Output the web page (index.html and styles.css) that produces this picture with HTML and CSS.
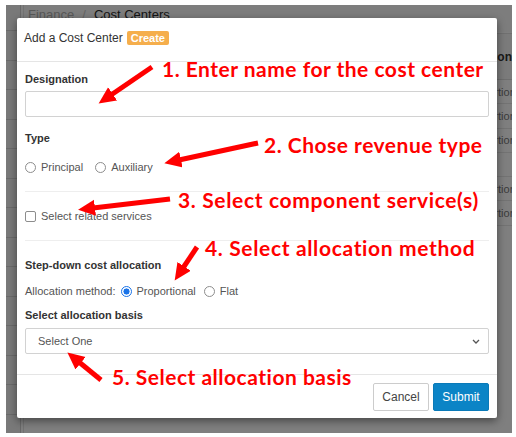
FILE: index.html
```html
<!DOCTYPE html>
<html>
<head>
<meta charset="utf-8">
<link rel="stylesheet" href="styles.css">
</head>
<body>
<div class="screen">
  <div class="page">
    <div class="sidebar"></div>
    <div class="main">
      <div class="crumbs"><span class="crumb-muted">Finance</span><span class="crumb-sep">/</span><span class="crumb-current">Cost Centers</span></div>
      <div class="table">
        <div class="thead"><span class="cell-right">Allocation</span></div>
        <div class="trow"><span class="cell-right">Proportional</span></div>
        <div class="trow"><span class="cell-right">Proportional</span></div>
        <div class="trow"><span class="cell-right">Proportional</span></div>
        <div class="trow"><span class="cell-right"></span></div>
        <div class="trow"><span class="cell-right">Proportional</span></div>
        <div class="trow"><span class="cell-right">Proportional</span></div>
      </div>
    </div>
  </div>
  <div class="backdrop"></div>
  <div class="modal">
    <div class="modal-header"><span class="title">Add a Cost Center</span><span class="badge">Create</span></div>
    <div class="modal-body">
      <div class="label first">Designation</div>
      <div class="field"></div>
      <div class="label type-label">Type</div>
      <div class="choice-row type-row">
        <span class="radio"></span><span class="opt-text">Principal</span>
        <span class="radio next"></span><span class="opt-text">Auxiliary</span>
      </div>
      <div class="divider"></div>
      <div class="choice-row check-row">
        <span class="checkbox"></span><span class="opt-text">Select related services</span>
      </div>
      <div class="divider"></div>
      <div class="label step-label">Step-down cost allocation</div>
      <div class="choice-row alloc-row">
        <span class="opt-text">Allocation method:</span>
        <span class="radio checked"></span><span class="opt-text">Proportional</span>
        <span class="radio next-small"></span><span class="opt-text">Flat</span>
      </div>
      <div class="label basis-label">Select allocation basis</div>
      <div class="field select"><span>Select One</span>
        <svg class="chev" width="8" height="5" viewBox="0 0 8 5"><path d="M1 1 L4 4 L7 1" fill="none" stroke="#555" stroke-width="1.3"/></svg>
      </div>
    </div>
    <div class="modal-footer">
      <button class="btn btn-cancel">Cancel</button>
      <button class="btn btn-submit">Submit</button>
    </div>
  </div>
</div>

<div class="annotations">
  <svg class="arrows" width="516" height="437" viewBox="0 0 516 437">
    <defs>
      <marker id="head" markerUnits="userSpaceOnUse" markerWidth="18" markerHeight="18" refX="2" refY="8" orient="auto">
        <path d="M0 0 L17 8 L0 16 Z" fill="#ff0000"/>
      </marker>
    </defs>
    <line x1="152" y1="67" x2="111" y2="95" stroke="#ff0000" stroke-width="5" marker-end="url(#head)"/>
    <line x1="258" y1="143" x2="179" y2="160" stroke="#ff0000" stroke-width="5" marker-end="url(#head)"/>
    <line x1="170" y1="199" x2="93" y2="208" stroke="#ff0000" stroke-width="5" marker-end="url(#head)"/>
    <line x1="197" y1="247" x2="183" y2="268" stroke="#ff0000" stroke-width="5" marker-end="url(#head)"/>
    <line x1="101" y1="380" x2="79" y2="362" stroke="#ff0000" stroke-width="5" marker-end="url(#head)"/>
  </svg>
  <div class="note n1">1. Enter name for the cost center</div>
  <div class="note n2">2. Chose revenue type</div>
  <div class="note n3">3. Select component service(s)</div>
  <div class="note n4">4. Select allocation method</div>
  <div class="note n5">5. Select allocation basis</div>
</div>
</body>
</html>
```

FILE: styles.css
```css
* { box-sizing: border-box; }
html, body { margin: 0; padding: 0; background: #ffffff; }
body {
  width: 516px;
  height: 437px;
  position: relative;
  overflow: hidden;
  font-family: "Liberation Sans", Arial, sans-serif;
}

.screen {
  position: relative;
  margin: 5px 0 0 6px;
  width: 506px;
  height: 428px;
  overflow: hidden;
  background: #ffffff;
}

.page {
  display: flex;
  height: 100%;
}
.sidebar {
  width: 15px;
  flex: none;
  background-color: #f2f2f2;
  border-right: 1px solid #d0d0d0;
  background-image: repeating-linear-gradient(to bottom, transparent 0, transparent 28.5px, #d4d4d4 28.5px, #d4d4d4 29.5px);
  background-position: 0 -3px;
}
.main {
  flex: 1;
  border-left: 1px solid #e4e4e4;
  margin-left: 2px;
  display: flex;
  flex-direction: column;
}
.crumbs {
  height: 27px;
  padding: 2px 0 0 4px;
  font-size: 13px;
  line-height: 15px;
  display: flex;
  gap: 8px;
  background: #fafafa;
}
.crumb-muted { color: #b0b0b0; }
.crumb-sep { color: #c8c8c8; }
.crumb-current { color: #2a2a2a; }

.table {
  border-top: 1px solid #e0e0e0;
  margin-top: 1px;
}
.thead {
  height: 46px;
  display: flex;
  align-items: center;
  border-bottom: 1px solid #dcdcdc;
  background: #f6f6f6;
  font-size: 12px;
  font-weight: bold;
  color: #333;
}
.trow {
  height: 24.3px;
  display: flex;
  align-items: center;
  border-bottom: 1px solid #e6e6e6;
  font-size: 11px;
  color: #777;
}
.cell-right {
  margin-left: auto;
  width: 15px;
  overflow: hidden;
  white-space: nowrap;
  text-indent: -32px;
}
.thead .cell-right { text-indent: -43px; }

.backdrop {
  position: absolute;
  inset: 0;
  background: rgba(0, 0, 0, 0.5);
}

.modal {
  position: absolute;
  left: 11px;
  top: 13px;
  width: 480px;
  height: 400px;
  background: #ffffff;
  border-radius: 2px;
  box-shadow: 0 3px 8px rgba(0, 0, 0, 0.45);
  display: flex;
  flex-direction: column;
}

.modal-header {
  height: 44px;
  padding: 13px 7px 0;
  border-bottom: 1px solid #e5e5e5;
  display: flex;
  align-items: flex-start;
  gap: 4px;
}
.title {
  font-size: 12px;
  line-height: 14px;
  color: #333;
}
.badge {
  background: #f5ae4c;
  color: #fff;
  font-size: 11px;
  font-weight: bold;
  line-height: 14px;
  height: 14px;
  padding: 0 4px;
  border-radius: 2px;
}

.modal-body {
  flex: 1;
  padding: 10px 8px 0;
  display: flex;
  flex-direction: column;
}
.label {
  font-size: 11px;
  line-height: 14px;
  font-weight: bold;
  color: #333;
}
.type-label { margin-top: 14px; }
.step-label { margin-top: 17px; }
.basis-label { margin-top: 8px; }

.field {
  margin-top: 5px;
  height: 26px;
  border: 1px solid #d2d2d2;
  border-radius: 2px;
  background: #fff;
}
.select {
  margin-top: 6px;
  display: flex;
  align-items: center;
  justify-content: space-between;
  padding: 0 8px 0 12px;
  font-size: 11px;
  color: #555;
}
.chev { display: block; }

.choice-row {
  display: flex;
  align-items: center;
  height: 18px;
  font-size: 11px;
  color: #555;
}
.type-row { margin-top: 13px; }
.check-row { margin-top: 15px; }
.alloc-row { margin-top: 10px; }

.radio {
  width: 11px;
  height: 11px;
  border: 1px solid #8d8d8d;
  border-radius: 50%;
  margin-right: 5px;
  flex: none;
}
.radio.next { margin-left: 12px; }
.alloc-row .radio.checked { margin-left: 5px; }
.radio.next-small { margin-left: 8px; }
.radio.checked {
  border: 1px solid #1a73e8;
  background: radial-gradient(circle, #1a73e8 0, #1a73e8 2.8px, #fff 3.3px);
}
.checkbox {
  width: 11px;
  height: 11px;
  border: 1px solid #8d8d8d;
  border-radius: 2px;
  margin-right: 5px;
  flex: none;
}
.opt-text { white-space: nowrap; }

.divider {
  margin-top: 15px;
  height: 1px;
  background: #eeeeee;
}

.modal-footer {
  height: 44px;
  border-top: 1px solid #e5e5e5;
  padding: 8px 8px 0;
  display: flex;
  justify-content: flex-end;
  align-items: flex-start;
  gap: 4px;
}
.btn {
  width: 56px;
  height: 28px;
  font-family: "Liberation Sans", Arial, sans-serif;
  font-size: 12px;
  border-radius: 2px;
  padding: 0;
  cursor: pointer;
}
.btn-cancel {
  background: #fff;
  border: 1px solid #cccccc;
  color: #444;
}
.btn-submit {
  background: #0b84c6;
  border: 1px solid #0a7ab8;
  color: #fff;
}

.annotations {
  position: absolute;
  left: 0;
  top: 0;
  width: 516px;
  height: 437px;
  pointer-events: none;
}
.arrows { position: absolute; left: 0; top: 0; }
.note {
  position: absolute;
  font-family: Lato, "Open Sans", sans-serif;
  font-weight: bold;
  font-size: 21px;
  line-height: 24px;
  color: #ff0000;
  white-space: nowrap;
  letter-spacing: 0.5px;
}
.n3, .n4 { letter-spacing: 0.65px; }
.n1 { left: 162px; top: 57px; }
.n2 { left: 264px; top: 133px; }
.n3 { left: 178px; top: 188px; }
.n4 { left: 205px; top: 236px; }
.n5 { left: 112px; top: 365px; }
```
